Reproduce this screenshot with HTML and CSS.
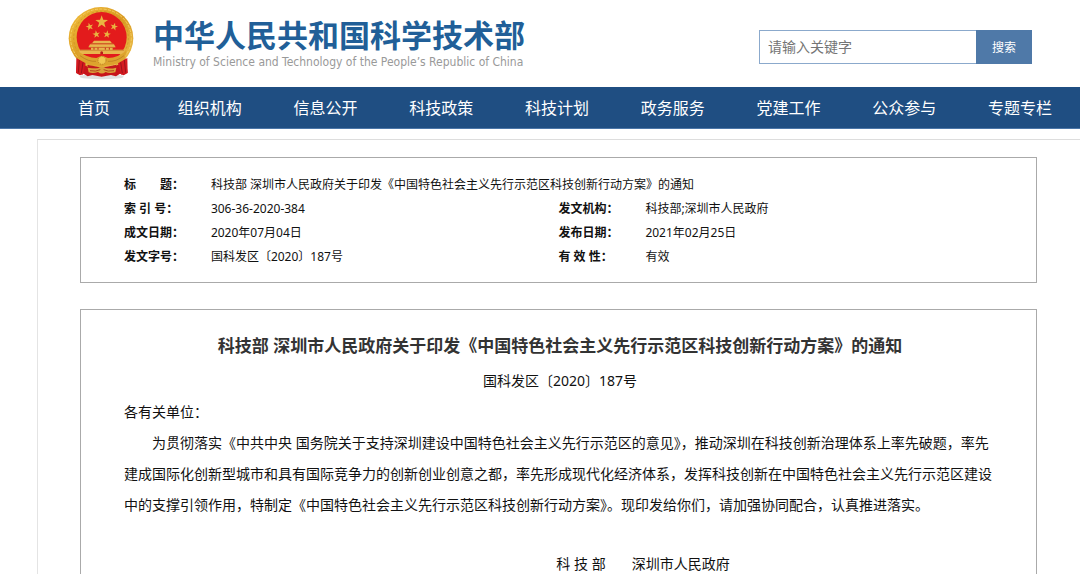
FILE: index.html
```html
<!DOCTYPE html>
<html lang="zh-CN">
<head>
<meta charset="utf-8">
<meta name="viewport" content="width=device-width, initial-scale=1">
<title>中华人民共和国科学技术部</title>
<link rel="stylesheet" href="styles.css">
</head>
<body>
<header class="header">
  <div class="brand">
    <svg class="emblem" viewBox="51 18 201 225" aria-hidden="true">
      <defs>
        <linearGradient id="gold" x1="0" y1="0" x2="1" y2="1">
          <stop offset="0" stop-color="#f3bf3c"/>
          <stop offset=".5" stop-color="#d99a22"/>
          <stop offset="1" stop-color="#efc350"/>
        </linearGradient>
        <path id="star" d="M0-10 2.4-3.2 9.5-3.1 3.8 1.2 5.9 8.1 0 4-5.9 8.1-3.8 1.2-9.5-3.1-2.4-3.2Z"/>
      </defs>
      <ellipse cx="155" cy="230" rx="66" ry="8" fill="#e0e0e0"/>
      <path d="M84 172 78 219 90 226 101 221 113 229 127 225 155 230 183 225 198 229 210 221 221 226 233 219 226 172Z" fill="#c8141b"/>
      <ellipse cx="153" cy="115" rx="97" ry="94" fill="url(#gold)"/>
      <ellipse cx="153" cy="115" rx="91" ry="88" fill="none" stroke="#f3cd62" stroke-width="3" stroke-dasharray="9 4"/>
      <ellipse cx="153" cy="114" rx="82" ry="80" fill="none" stroke="#c98d24" stroke-width="2" stroke-dasharray="7 6"/>
      <ellipse cx="155" cy="112" rx="75" ry="76" fill="#e31b1c"/>
      <g fill="#e9b440">
        <use href="#star" transform="translate(155 66) scale(2)"/>
        <use href="#star" transform="translate(119 80) rotate(-15) scale(1.200)"/>
        <use href="#star" transform="translate(192 80) rotate(15) scale(1.200)"/>
        <use href="#star" transform="translate(139 103) rotate(-8) scale(1.200)"/>
        <use href="#star" transform="translate(171 103) rotate(8) scale(1.200)"/>
      </g>
      <path d="M126 130 132 122H180L186 130ZM120 133H192L197 142H115ZM123 143H188V149H224V162H88V149H123Z" fill="#e8b64e"/>
      <path d="M122 131H190M118 142H194M90 151H222" stroke="#c4782a" stroke-width="2"/>
      <path d="M132 143V149M144 143V149M166 143V149M178 143V149" stroke="#c22d1b" stroke-width="3"/>
      <path d="M151 162V156Q155 151 159 156V162Z" fill="#b82119"/>
      <path d="M79 151Q112 174 139 174L156 167 174 174Q204 174 230 151L224 177Q199 199 173 194L156 199 137 194Q108 196 86 177Z" fill="#dda32d"/>
      <path d="M90 167Q116 186 138 184M222 167Q198 186 174 184" fill="none" stroke="#b5741f" stroke-width="2"/>
      <circle cx="156" cy="181" r="12" fill="#f1c64f" stroke="#bd8126" stroke-width="3" stroke-dasharray="4 3"/>
      <path d="M79 174 107 190 98 224 78 218ZM232 174 204 190 214 224 233 218Z" fill="#d51a20"/>
      <path d="M88 180 85 218M99 187 94 220M223 180 227 218M212 187 217 220" stroke="#9c1119" stroke-width="3"/>
      <path d="M112 194Q134 199 155 203 178 199 200 194L197 206H115Z" fill="#c21b1d"/>
      <path d="M113 203Q130 206 144 205 156 195 168 205 184 207 199 203L196 217Q178 222 167 216 155 225 144 216 129 222 116 217Z" fill="#dba13b"/>
      <path d="M120 212Q137 216 151 209M192 212Q174 216 161 209" fill="none" stroke="#b5441f" stroke-width="3"/>
    </svg>
    <div class="brand-text">
      <h1 class="brand-name">中华人民共和国科学技术部</h1>
      <p class="brand-en" lang="en">Ministry of Science and Technology of the People’s Republic of China</p>
    </div>
  </div>
  <form class="search" role="search">
    <input class="search-input" type="text" placeholder="请输入关键字" aria-label="请输入关键字">
    <button class="search-button" type="submit">搜索</button>
  </form>
</header>
<nav class="nav">
  <a href="#">首页</a>
  <a href="#">组织机构</a>
  <a href="#">信息公开</a>
  <a href="#">科技政策</a>
  <a href="#">科技计划</a>
  <a href="#">政务服务</a>
  <a href="#">党建工作</a>
  <a href="#">公众参与</a>
  <a href="#">专题专栏</a>
</nav>
<main class="page">
  <section class="box info">
    <table class="info-table">
      <colgroup><col class="col-label"><col class="col-value"><col class="col-label"><col></colgroup>
      <tr><th scope="row">标　　题：</th><td colspan="3">科技部 深圳市人民政府关于印发《中国特色社会主义先行示范区科技创新行动方案》的通知</td></tr>
      <tr><th scope="row">索 引 号：</th><td>306-36-2020-384</td><th scope="row">发文机构：</th><td>科技部;深圳市人民政府</td></tr>
      <tr><th scope="row">成文日期：</th><td>2020年07月04日</td><th scope="row">发布日期：</th><td>2021年02月25日</td></tr>
      <tr><th scope="row">发文字号：</th><td>国科发区〔2020〕187号</td><th scope="row">有 效 性：</th><td>有效</td></tr>
    </table>
  </section>
  <article class="box article">
    <h2 class="article-title">科技部 深圳市人民政府关于印发《中国特色社会主义先行示范区科技创新行动方案》的通知</h2>
    <p class="doc-number">国科发区〔2020〕187号</p>
    <p>各有关单位：</p>
    <p class="paragraph">为贯彻落实《中共中央 国务院关于支持深圳建设中国特色社会主义先行示范区的意见》，推动深圳在科技创新治理体系上率先破题，率先建成国际化创新型城市和具有国际竞争力的创新创业创意之都，率先形成现代化经济体系，发挥科技创新在中国特色社会主义先行示范区建设中的支撑引领作用，特制定《中国特色社会主义先行示范区科技创新行动方案》。现印发给你们，请加强协同配合，认真推进落实。</p>
    <p class="signature"><span>科 技 部</span><span>深圳市人民政府</span></p>
  </article>
</main>
</body>
</html>
```

FILE: styles.css
```css
* {
  box-sizing: border-box;
}

body {
  margin: 0;
  background: #fff;
  color: #111;
  font-family: "Noto Sans", "Noto Sans CJK SC", sans-serif;
  font-size: 14px;
}

h1, h2, p {
  margin: 0;
}

.header {
  display: flex;
  justify-content: space-between;
  align-items: flex-start;
  padding: 6px 48px 6px 67px;
}

.brand {
  display: flex;
  gap: 19px;
}

.emblem {
  width: 67px;
  height: 75px;
}

.brand-text {
  padding-top: 8px;
}

.brand-name {
  color: #215f98;
  font-family: "Noto Sans CJK SC", sans-serif;
  font-size: 31px;
  font-weight: 700;
  line-height: 40px;
}

.brand-en {
  color: #999;
  font-family: "DejaVu Sans Condensed", "Liberation Sans", sans-serif;
  font-size: 12px;
  line-height: 16px;
}

.search {
  display: flex;
  width: 273px;
  height: 34px;
  margin-top: 24px;
}

.search-input {
  flex: 1;
  min-width: 0;
  padding: 0 8px 2px;
  border: 1px solid #8ba9cc;
  border-right: 0;
  border-radius: 0;
  color: #333;
  font: inherit;
}

.search-input::placeholder {
  color: #757575;
}

.search-button {
  width: 56px;
  padding: 0;
  border: 0;
  background: #4f79a8;
  color: #fff;
  font: inherit;
  font-size: 12px;
}

.nav {
  display: grid;
  grid-template-columns: repeat(9, 1fr);
  padding: 1px 2px 0 36px;
  border-bottom: 1px solid #4b76a8;
  background: #1f4e82;
}

.nav a {
  color: #fff;
  font-size: 16px;
  line-height: 40px;
  text-align: center;
  text-decoration: none;
}

.page {
  margin: 10px 0 0 37px;
  padding: 17px 43px 0 42px;
  border-top: 1px solid #ddd;
  border-left: 1px solid #e4e4e4;
}

.box {
  border: 1px solid #aaa;
}

.info {
  margin-bottom: 26px;
  padding: 15px 43px 13px;
}

.info-table {
  width: 100%;
  border-collapse: collapse;
  table-layout: fixed;
  font-size: 12px;
  line-height: 24px;
}

.info-table th,
.info-table td {
  padding: 0;
  text-align: left;
}

.col-label {
  width: 10%;
}

.col-value {
  width: 40%;
}

.article {
  padding: 20px 40px 20px 43px;
  border-bottom: 0;
  line-height: 31px;
}

.article-title {
  color: #333;
  font-size: 17px;
  text-align: center;
}

.doc-number {
  margin-top: 4px;
  text-align: center;
}

.paragraph {
  text-indent: 2em;
}

.signature {
  display: flex;
  justify-content: center;
  gap: 26px;
  margin-top: 28px;
  padding-left: 166px;
}
```
